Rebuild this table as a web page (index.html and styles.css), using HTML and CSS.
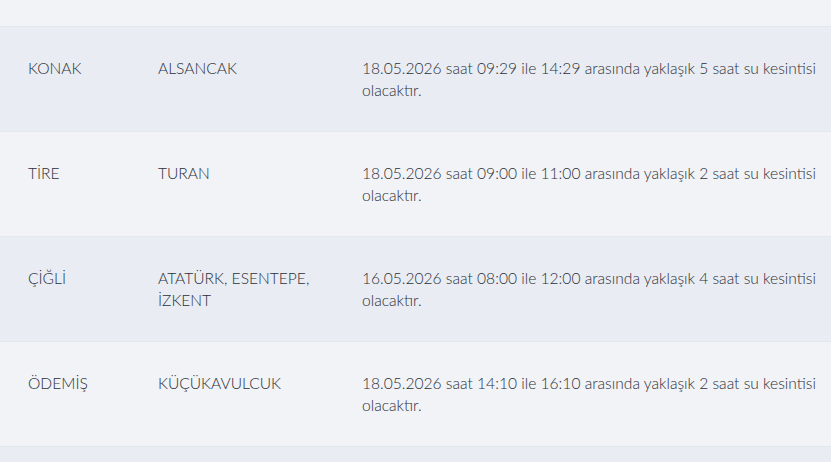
FILE: index.html
```html
<!DOCTYPE html>
<html lang="tr">
<head>
<meta charset="utf-8">
<link rel="stylesheet" href="styles.css">
</head>
<body>
<div class="list">
  <div class="row light stub"></div>
  <div class="row dark">
    <div class="cell">KONAK</div>
    <div class="cell">ALSANCAK</div>
    <div class="cell">18.05.2026 saat 09:29 ile 14:29 arasında yaklaşık 5 saat su kesintisi olacaktır.</div>
  </div>
  <div class="row light">
    <div class="cell">TİRE</div>
    <div class="cell">TURAN</div>
    <div class="cell">18.05.2026 saat 09:00 ile 11:00 arasında yaklaşık 2 saat su kesintisi olacaktır.</div>
  </div>
  <div class="row dark">
    <div class="cell">ÇİĞLİ</div>
    <div class="cell">ATATÜRK, ESENTEPE, İZKENT</div>
    <div class="cell">16.05.2026 saat 08:00 ile 12:00 arasında yaklaşık 4 saat su kesintisi olacaktır.</div>
  </div>
  <div class="row light">
    <div class="cell">ÖDEMİŞ</div>
    <div class="cell">KÜÇÜKAVULCUK</div>
    <div class="cell">18.05.2026 saat 14:10 ile 16:10 arasında yaklaşık 2 saat su kesintisi olacaktır.</div>
  </div>
  <div class="row dark stub"></div>
</div>
</body>
</html>
```

FILE: styles.css
```css
html, body {
  margin: 0;
  padding: 0;
  background: #e9edf3;
  overflow: hidden;
}
body {
  font-family: "Lato", "Liberation Sans", sans-serif;
  font-size: 15.6px;
  font-weight: 300;
  line-height: 22px;
  color: #2c3038;
}
.list {
  display: flex;
  flex-direction: column;
  margin-top: -78px;
}
.row {
  display: grid;
  grid-template-columns: 130px 204px 1fr;
  padding: 30px 4px 30px 28px;
  min-height: 44px;
  border-bottom: 1px solid #e3e7ee;
}
.row.light { background: #f1f3f7; }
.row.dark { background: #e9edf3; }
.cell {
  padding-right: 24px;
}
.cell:last-child { padding-right: 0; }
```
